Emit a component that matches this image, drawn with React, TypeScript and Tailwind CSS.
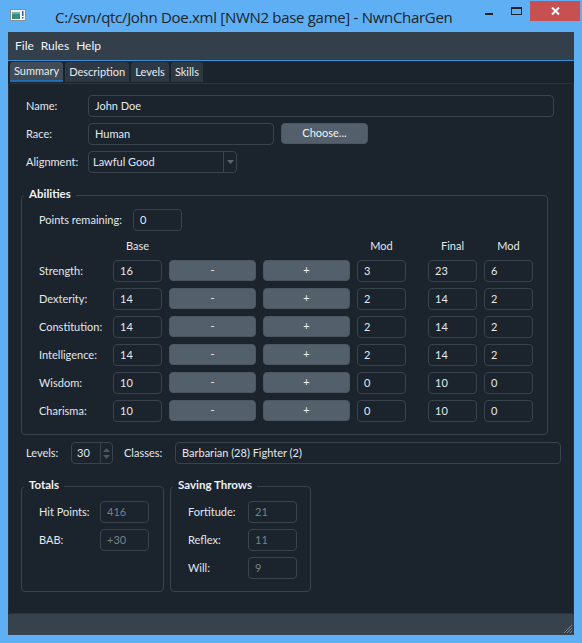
import React from 'react';

const Field = ({ w, value, disabled }: { w: string; value: string; disabled?: boolean }) => (
  <div
    className={`h-[22px] ${w} shrink-0 rounded-[4px] border border-[#38434e] pl-[6px] flex items-center ${
      disabled ? 'text-[#76818b]' : 'text-[#e4e9ed]'
    }`}
  >
    {value}
  </div>
);

const Btn = ({ w, label }: { w: string; label: string }) => (
  <div className={`h-[21px] ${w} shrink-0 rounded-[4px] bg-[#535f6a] border border-[#4b5661] flex items-center justify-center text-[#f0f3f5]`}>
    {label}
  </div>
);

const GroupBox = ({ title, className, children }: { title: string; className: string; children: React.ReactNode }) => (
  <fieldset className={`border border-[#38434e] rounded-[4px] ${className}`}>
    <legend className="ml-[2px] px-[5px] pb-[3px] font-bold text-[11.5px] leading-[16px] text-[#eef2f5]">{title}</legend>
    {children}
  </fieldset>
);

const abilities = [
  ['Strength:', '16', '3', '23', '6'],
  ['Dexterity:', '14', '2', '14', '2'],
  ['Constitution:', '14', '2', '14', '2'],
  ['Intelligence:', '14', '2', '14', '2'],
  ['Wisdom:', '10', '0', '10', '0'],
  ['Charisma:', '10', '0', '10', '0'],
];

export default function App() {
  return (
    <div className="w-[582px] h-[643px] bg-[#5eaff4] flex flex-col overflow-hidden font-['Lato',sans-serif] text-[11px] text-[#e2e8ec] whitespace-nowrap">
      {/* title bar */}
      <div className="h-[32px] shrink-0 flex items-start relative">
        <svg className="mt-[9px] ml-[10px]" width="16" height="12" viewBox="0 0 16 12">
          <rect x="0.5" y="0.5" width="15" height="11" fill="#f4f4f4" stroke="#8a8f94" />
          <rect x="2" y="3" width="8" height="7" fill="#3d8a78" />
          <rect x="2" y="3" width="8" height="2" fill="#6bb7a4" />
          <rect x="12" y="2" width="1.5" height="5" fill="#2a5fc0" />
          <rect x="12" y="8" width="1.5" height="1.5" fill="#2a5fc0" />
        </svg>
        <div className="ml-[29px] mt-[6px] text-[15px] leading-[22px] text-[#1e2328] font-['Open_Sans',sans-serif] tracking-[-0.3px]">
          C:/svn/qtc/John Doe.xml [NWN2 base game] - NwnCharGen
        </div>
        <div className="ml-auto flex items-start">
          <div className="w-[8px] h-[2px] bg-[#1e2328] mt-[13px] mr-[18px]" />
          <div className="w-[11px] h-[8px] border border-[#1e2328] border-t-[2px] mt-[7px] mr-[8px]" />
          <div className="w-[50px] h-[20px] mt-[1px] mr-[2px] bg-[#c75050] flex items-center justify-center">
            <svg width="9" height="8" viewBox="0 0 9 8">
              <path d="M1 0.5 L8 7.5 M8 0.5 L1 7.5" stroke="#ffffff" strokeWidth="2" />
            </svg>
          </div>
        </div>
      </div>

      <div className="flex-1 mx-[8px] mb-[8px] flex flex-col bg-[#1b232c]">
        {/* menu bar */}
        <div className="h-[29px] shrink-0 bg-[#333f4a] border-b border-[#3a8fd8] flex items-center pl-[7px] gap-[7px] text-[#f2f5f7] text-[12px]">
          <span>File</span>
          <span>Rules</span>
          <span>Help</span>
        </div>

        {/* tabs */}
        <div className="h-[22px] shrink-0 flex items-start pt-[1px] pl-[2px] gap-[2px] text-[#e8edf0] text-[11px]">
          <div className="h-[20px] px-[4px] rounded-t-[3px] bg-[#404c57] border-b-[2px] border-[#1f6fb8] flex items-center">Summary</div>
          <div className="h-[20px] px-[4px] rounded-t-[3px] bg-[#2c3843] flex items-center">Description</div>
          <div className="h-[20px] px-[4px] rounded-t-[3px] bg-[#2c3843] flex items-center">Levels</div>
          <div className="h-[20px] px-[4px] rounded-t-[3px] bg-[#2c3843] flex items-center">Skills</div>
        </div>

        {/* tab page */}
        <div className="flex-1 border border-[#2a343e] rounded-[2px] pt-[11px] pl-[12px] flex flex-col">
          <div className="pl-[5px] flex flex-col gap-[6px]">
            <div className="flex items-center">
              <span className="w-[62px] shrink-0">Name:</span>
              <Field w="w-[466px]" value="John Doe" />
            </div>
            <div className="flex items-center">
              <span className="w-[62px] shrink-0">Race:</span>
              <Field w="w-[186px]" value="Human" />
              <div className="ml-[7px] self-start">
                <Btn w="w-[87px]" label="Choose..." />
              </div>
            </div>
            <div className="flex items-center">
              <span className="w-[62px] shrink-0">Alignment:</span>
              <div className="h-[22px] w-[149px] rounded-[4px] border border-[#38434e] flex items-center">
                <span className="flex-1 pl-[4px]">Lawful Good</span>
                <div className="w-[13px] h-full border-l border-[#38434e] flex items-center justify-center">
                  <svg width="7" height="4" viewBox="0 0 7 4">
                    <path d="M0 0 L7 0 L3.5 4 Z" fill="#5d6873" />
                  </svg>
                </div>
              </div>
            </div>
          </div>

          {/* abilities */}
          <GroupBox title="Abilities" className="mt-[13px] w-[527px] pb-[12px]">
            <div className="pl-[17px] pt-[4px] flex flex-col">
              <div className="flex items-center">
                <span className="w-[94px] shrink-0">Points remaining:</span>
                <Field w="w-[49px]" value="0" />
              </div>
              <div className="mt-[8px] h-[14px] flex items-center leading-[14px]">
                <span className="w-[74px] shrink-0" />
                <span className="w-[49px] text-center">Base</span>
                <span className="w-[195px] shrink-0" />
                <span className="w-[49px] text-center">Mod</span>
                <span className="w-[22px] shrink-0" />
                <span className="w-[49px] text-center">Final</span>
                <span className="w-[7px] shrink-0" />
                <span className="w-[49px] text-center">Mod</span>
              </div>
              <div className="mt-[7px] flex flex-col gap-[6px]">
                {abilities.map(([name, base, mod, fin, fmod]) => (
                  <div key={name} className="flex items-start">
                    <span className="w-[74px] shrink-0 h-[22px] flex items-center">{name}</span>
                    <Field w="w-[49px]" value={base} />
                    <div className="ml-[7px]">
                      <Btn w="w-[87px]" label="-" />
                    </div>
                    <div className="ml-[7px]">
                      <Btn w="w-[87px]" label="+" />
                    </div>
                    <div className="ml-[7px]">
                      <Field w="w-[49px]" value={mod} />
                    </div>
                    <div className="ml-[22px]">
                      <Field w="w-[49px]" value={fin} />
                    </div>
                    <div className="ml-[7px]">
                      <Field w="w-[49px]" value={fmod} />
                    </div>
                  </div>
                ))}
              </div>
            </div>
          </GroupBox>

          {/* levels / classes */}
          <div className="mt-[7px] pl-[5px] flex items-center">
            <span className="w-[45px] shrink-0">Levels:</span>
            <div className="h-[22px] w-[42px] rounded-[4px] border border-[#38434e] flex">
              <span className="flex-1 pl-[5px] flex items-center">30</span>
              <div className="w-[12px] border-l border-[#38434e] flex flex-col items-center justify-center gap-[3px]">
                <svg width="7" height="4" viewBox="0 0 7 4">
                  <path d="M0 4 L7 4 L3.5 0 Z" fill="#4b5661" />
                </svg>
                <svg width="7" height="4" viewBox="0 0 7 4">
                  <path d="M0 0 L7 0 L3.5 4 Z" fill="#4b5661" />
                </svg>
              </div>
            </div>
            <span className="ml-[11px] w-[51px] shrink-0">Classes:</span>
            <Field w="w-[386px]" value="Barbarian (28) Fighter (2)" />
          </div>

          {/* totals / saving throws */}
          <div className="mt-[13px] flex items-stretch">
            <GroupBox title="Totals" className="w-[143px] pb-[12px]">
              <div className="pl-[17px] pt-[5px] flex flex-col gap-[6px]">
                <div className="flex items-center">
                  <span className="w-[61px] shrink-0">Hit Points:</span>
                  <Field w="w-[49px]" value="416" disabled />
                </div>
                <div className="flex items-center">
                  <span className="w-[61px] shrink-0">BAB:</span>
                  <Field w="w-[49px]" value="+30" disabled />
                </div>
              </div>
            </GroupBox>
            <GroupBox title="Saving Throws" className="ml-[6px] w-[141px] pb-[12px]">
              <div className="pl-[17px] pt-[5px] flex flex-col gap-[6px]">
                <div className="flex items-center">
                  <span className="w-[60px] shrink-0">Fortitude:</span>
                  <Field w="w-[49px]" value="21" disabled />
                </div>
                <div className="flex items-center">
                  <span className="w-[60px] shrink-0">Reflex:</span>
                  <Field w="w-[49px]" value="11" disabled />
                </div>
                <div className="flex items-center">
                  <span className="w-[60px] shrink-0">Will:</span>
                  <Field w="w-[49px]" value="9" disabled />
                </div>
              </div>
            </GroupBox>
          </div>
        </div>

        {/* status bar */}
        <div className="h-[21px] shrink-0 bg-[#36434d] flex justify-end items-end">
          <svg width="11" height="11" viewBox="0 0 11 11" className="mb-[1px] mr-[1px]">
            <path d="M10 2 L2 10 M10 5 L5 10 M10 8 L8 10" stroke="#7d8891" strokeWidth="1" />
          </svg>
        </div>
      </div>
    </div>
  );
}
